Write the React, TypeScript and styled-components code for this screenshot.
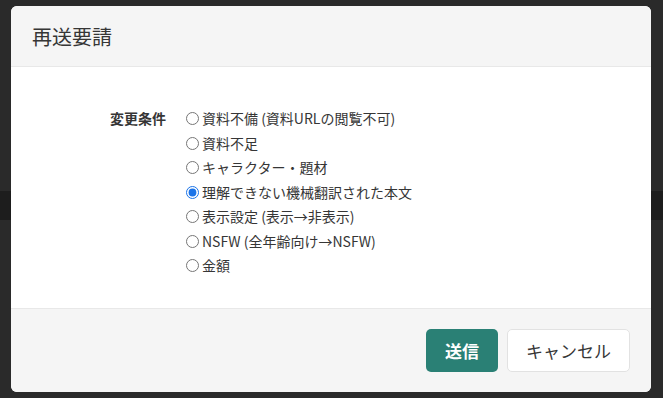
import React, { useState } from "react";
import styled, { createGlobalStyle } from "styled-components";

const Global = createGlobalStyle`
  html, body { margin: 0; padding: 0; }
  body {
    width: 663px;
    height: 398px;
    overflow: hidden;
    background: linear-gradient(to bottom, #2a2a2a 0, #2a2a2a 191px, #1d1d1d 191px, #1d1d1d 220px, #2a2a2a 220px);
    font-family: "Noto Sans CJK JP", "Noto Sans", sans-serif;
    color: #363636;
  }
`;

const Overlay = styled.div`
  padding: 6px 12px 6px 11px;
`;

const Card = styled.div`
  width: 640px;
  height: 386px;
  display: flex;
  flex-direction: column;
  border-radius: 6px;
  overflow: hidden;
  background: #fff;
`;

const Head = styled.header`
  height: 60px;
  flex: none;
  display: flex;
  align-items: center;
  padding: 0 21px;
  background: #f5f5f5;
  border-bottom: 1px solid #e8e8e8;
`;

const Title = styled.h1`
  margin: 0;
  font-size: 20px;
  font-weight: 400;
  line-height: 1;
  color: #363636;
  padding-top: 2px;
`;

const Body = styled.section`
  flex: 1;
  padding: 39px 0 0 99px;
  display: flex;
  gap: 20px;
`;

const FieldLabel = styled.div`
  width: 56px;
  font-size: 14px;
  font-weight: 700;
  line-height: 24.5px;
  color: #363636;
`;

const Options = styled.div`
  display: flex;
  flex-direction: column;
`;

const Option = styled.label`
  display: flex;
  align-items: center;
  font-size: 14px;
  line-height: 24.5px;
  color: #363636;
  cursor: pointer;
`;

const Radio = styled.input`
  width: 13px;
  height: 13px;
  margin: 1px 3px 0 0;
  accent-color: #1a73e8;
`;

const Foot = styled.footer`
  height: 84px;
  flex: none;
  box-sizing: border-box;
  display: flex;
  align-items: center;
  justify-content: flex-end;
  gap: 9px;
  padding: 0 21px 0 20px;
  background: #f5f5f5;
  border-top: 1px solid #e8e8e8;
`;

const Button = styled.button<{ $primary?: boolean }>`
  height: 43px;
  padding: 0 18px;
  border-radius: 5px;
  font-family: inherit;
  font-size: 17px;
  line-height: 1;
  cursor: pointer;
  border: 1px solid ${(p) => (p.$primary ? "transparent" : "#e2e2e2")};
  background: ${(p) => (p.$primary ? "#2a8075" : "#fff")};
  color: ${(p) => (p.$primary ? "#fff" : "#363636")};
  font-weight: ${(p) => (p.$primary ? 700 : 400)};
  min-width: ${(p) => (p.$primary ? "72px" : "123px")};
`;

const options = [
  "資料不備 (資料URLの閲覧不可)",
  "資料不足",
  "キャラクター・題材",
  "理解できない機械翻訳された本文",
  "表示設定 (表示→非表示)",
  "NSFW (全年齢向け→NSFW)",
  "金額",
];

export default function App() {
  const [sel, setSel] = useState(3);
  return (
    <>
      <Global />
      <Overlay>
        <Card>
          <Head>
            <Title>再送要請</Title>
          </Head>
          <Body>
            <FieldLabel>変更条件</FieldLabel>
            <Options>
              {options.map((o, i) => (
                <Option key={o}>
                  <Radio type="radio" name="cond" checked={sel === i} onChange={() => setSel(i)} />
                  {o}
                </Option>
              ))}
            </Options>
          </Body>
          <Foot>
            <Button $primary>送信</Button>
            <Button>キャンセル</Button>
          </Foot>
        </Card>
      </Overlay>
    </>
  );
}
